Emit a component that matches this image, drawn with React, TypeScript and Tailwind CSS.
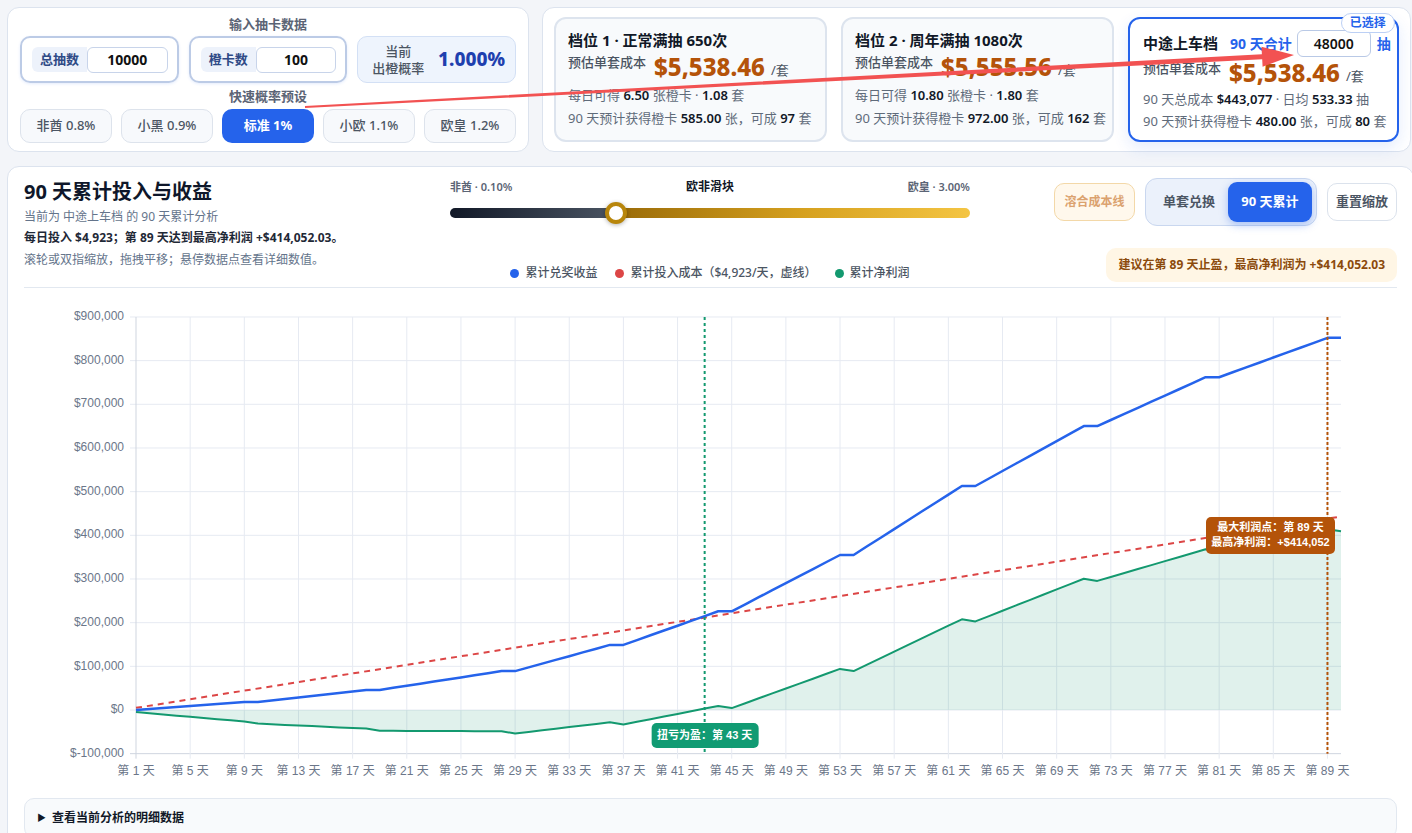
import React from 'react';

const TOTAL_COST = 443077;
const DAILY_COST = TOTAL_COST / 90;

// cumulative reward checkpoints (day, value); flat pairs = no exchange that day
const REWARD_KEYS: Array<[number, number]> = [
  [1, 0], [9, 18000], [10, 18000], [18, 46000], [19, 46000], [28, 89000], [29, 89000],
  [36, 149000], [37, 149000], [44, 226000], [45, 226000], [53, 355000], [54, 355000],
  [62, 513000], [63, 513000], [71, 650000], [72, 650000], [80, 762000], [81, 762000],
  [89, 852205], [90, 852205],
];

function rewardOn(day: number) {
  for (let i = 1; i < REWARD_KEYS.length; i++) {
    const [d1, v1] = REWARD_KEYS[i];
    if (day <= d1) {
      const [d0, v0] = REWARD_KEYS[i - 1];
      return v0 + ((v1 - v0) * (day - d0)) / (d1 - d0);
    }
  }
  return REWARD_KEYS[REWARD_KEYS.length - 1][1];
}

const PLOT_L = 112;
const PLOT_R = 1317;
const ZERO_Y = 414;
const PX_PER_100K = 43.67;
const PLOT_T = ZERO_Y - 9 * PX_PER_100K;
const PLOT_B = ZERO_Y + PX_PER_100K;

const xOf = (d: number) => PLOT_L + ((d - 1) / 89) * (PLOT_R - PLOT_L);
const yOf = (v: number) => ZERO_Y - (v / 100000) * PX_PER_100K;

const PRESETS = [
  { label: '非酋 0.8%' },
  { label: '小黑 0.9%' },
  { label: '标准 1%', active: true },
  { label: '小欧 1.1%' },
  { label: '欧皇 1.2%' },
];

function InputBox({ label, value }: { label: string; value: string }) {
  return (
    <div className="flex items-center rounded-[10px] border-2 border-[#bccbe6] pl-[10px] pr-[9px] shadow-[0_1px_3px_rgba(37,99,235,0.12)]">
      <span className="flex h-[25px] items-center rounded-l-[6px] bg-[#edf2fb] px-[8px] text-[13px] font-semibold text-[#2f4a86]">
        {label}
      </span>
      <div className="flex h-[26px] flex-1 items-center justify-center rounded-[6px] border border-[#c8d4ea] bg-white text-[14px] font-bold text-[#111111]">
        {value}
      </div>
    </div>
  );
}

function Num({ children }: { children: React.ReactNode }) {
  return <span className="font-semibold text-[#111827]">{children}</span>;
}

function PriceRow({ value }: { value: string }) {
  return (
    <div className="flex h-[32px] items-center whitespace-nowrap">
      <span className="-mt-[8px] text-[13px] font-medium text-[#4b5563]">预估单套成本</span>
      <span className="ml-[8px] text-[24px] font-extrabold leading-[32px] text-[#b45309]">{value}</span>
      <span className="ml-[6px] mt-[8px] text-[13px] text-[#4b5563]">/套</span>
    </div>
  );
}

function ProfitChart() {
  const days = Array.from({ length: 90 }, (_, i) => i + 1);
  const reward = days.map(rewardOn);
  const net = days.map((d, i) => reward[i] - DAILY_COST * d);
  const path = (vals: number[]) =>
    vals.map((v, i) => `${i ? 'L' : 'M'}${xOf(i + 1).toFixed(1)},${yOf(v).toFixed(1)}`).join(' ');
  const area = `${path(net)} L${xOf(90).toFixed(1)},${ZERO_Y} L${xOf(1).toFixed(1)},${ZERO_Y} Z`;
  const yTicks = [-100000, 0, 100000, 200000, 300000, 400000, 500000, 600000, 700000, 800000, 900000];
  const xTicks = Array.from({ length: 23 }, (_, i) => 1 + i * 4);
  const fmt = (v: number) => (v < 0 ? `$-${Math.abs(v).toLocaleString('en-US')}` : `$${v.toLocaleString('en-US')}`);
  const beX = xOf(43);
  const maxX = xOf(89);

  return (
    <svg
      width={1373}
      height={492}
      viewBox="0 0 1373 492"
      className="mt-[8px] block font-['Liberation_Sans','Noto_Sans_CJK_SC',sans-serif]"
    >
      {/* grid */}
      {yTicks.map((v) => (
        <g key={v}>
          <line x1={PLOT_L - 6} x2={PLOT_R} y1={yOf(v)} y2={yOf(v)} stroke={v === -100000 ? '#cfd5df' : '#e6eaf2'} strokeWidth={1} />
          <text x={PLOT_L - 12} y={yOf(v)} textAnchor="end" dominantBaseline="middle" fontSize={12} fill="#6b7689">
            {fmt(v)}
          </text>
        </g>
      ))}
      {xTicks.map((d) => (
        <g key={d}>
          <line x1={xOf(d)} x2={xOf(d)} y1={PLOT_T} y2={PLOT_B + 5} stroke={d === 1 ? '#cfd5df' : '#e6eaf2'} strokeWidth={1} />
          <text x={xOf(d)} y={476} textAnchor="middle" dominantBaseline="middle" fontSize={12} fill="#6b7689">
            第 {d} 天
          </text>
        </g>
      ))}

      {/* series */}
      <path d={area} fill="rgba(16,150,112,0.13)" />
      <line
        x1={xOf(1)}
        y1={yOf(DAILY_COST)}
        x2={xOf(90)}
        y2={yOf(TOTAL_COST)}
        stroke="#dc4646"
        strokeWidth={2}
        strokeDasharray="6 5"
      />
      <path d={path(net)} fill="none" stroke="#13996f" strokeWidth={2} strokeLinejoin="round" />
      <path d={path(reward)} fill="none" stroke="#2563eb" strokeWidth={2.5} strokeLinejoin="round" />

      {/* break-even */}
      <line x1={beX} x2={beX} y1={PLOT_T} y2={PLOT_B} stroke="#13996f" strokeWidth={2} strokeDasharray="3 3" />
      <rect x={beX - 53} y={427} width={107} height={25} rx={5} fill="#119b73" />
      <text x={beX} y={440} textAnchor="middle" dominantBaseline="middle" fontSize={11} fontWeight={700} fill="#ffffff">
        扭亏为盈：第 43 天
      </text>

      {/* max profit */}
      <line x1={maxX} x2={maxX} y1={PLOT_T} y2={PLOT_B} stroke="#b45309" strokeWidth={2} strokeDasharray="3 2" />
      <rect x={1182} y={221} width={129} height={37} rx={5} fill="#b45309" />
      <text x={1246.5} y={232.5} textAnchor="middle" dominantBaseline="middle" fontSize={11} fontWeight={700} fill="#ffffff">
        最大利润点：第 89 天
      </text>
      <text x={1246.5} y={247.5} textAnchor="middle" dominantBaseline="middle" fontSize={11} fontWeight={700} fill="#ffffff">
        最高净利润：+$414,052
      </text>
    </svg>
  );
}

export default function App() {
  return (
    <div className="relative h-[833px] w-[1412px] overflow-hidden bg-[#f3f5f9] p-[7px] font-['Noto_Sans','Noto_Sans_CJK_SC',sans-serif]">
      <div className="flex h-[145px] w-[1401px] gap-[13px]">
        {/* input panel */}
        <section className="w-[522px] shrink-0 rounded-[12px] border border-[#dce3ee] bg-white px-[12px] pb-[10px] pt-[6px]">
          <div className="h-[20px] text-center text-[13px] font-bold leading-[20px] text-[#5b6475]">输入抽卡数据</div>
          <div className="mt-[2px] grid h-[47px] grid-cols-3 gap-[10px]">
            <InputBox label="总抽数" value="10000" />
            <InputBox label="橙卡数" value="100" />
            <div className="flex items-center justify-between rounded-[10px] border border-[#d3e0f5] bg-[#eef4fd] pl-[14px] pr-[10px]">
              <div className="text-center text-[13px] font-medium leading-[17px] text-[#4b5563]">
                当前
                <br />
                出橙概率
              </div>
              <div className="text-[19px] font-extrabold text-[#1e40af]">1.000%</div>
            </div>
          </div>
          <div className="mt-[2px] h-[22px] text-center text-[13px] font-bold leading-[22px] text-[#5b6475]">快速概率预设</div>
          <div className="mt-[2px] grid h-[34px] grid-cols-5 gap-[9px]">
            {PRESETS.map((p) => (
              <button
                key={p.label}
                type="button"
                className={
                  p.active
                    ? 'rounded-[10px] bg-[#2563eb] text-[13px] font-bold text-white'
                    : 'rounded-[10px] border border-[#dde3ec] bg-[#f7f9fc] text-[13px] font-medium text-[#4b5563]'
                }
              >
                {p.label}
              </button>
            ))}
          </div>
        </section>

        {/* tier cards */}
        <section className="flex-1 rounded-[12px] border border-[#dce3ee] bg-white px-[11px] py-[9px]">
          <div className="grid h-[125px] grid-cols-[273px_273px_1fr] gap-[14px]">
            <div className="rounded-[12px] border-2 border-[#dde4ee] bg-[#f8fafc] px-[12px] pt-[10px]">
              <div className="text-[15px] font-bold leading-[22px] text-[#111827]">档位 1 · 正常满抽 650次</div>
              <PriceRow value="$5,538.46" />
              <div className="mt-[2px] text-[13px] leading-[20px] text-[#5f6b7a]">
                每日可得 <Num>6.50</Num> 张橙卡 · <Num>1.08</Num> 套
              </div>
              <div className="mt-[3px] whitespace-nowrap text-[13px] leading-[20px] text-[#5f6b7a]">
                90 天预计获得橙卡 <Num>585.00</Num> 张，可成 <Num>97</Num> 套
              </div>
            </div>
            <div className="rounded-[12px] border-2 border-[#dde4ee] bg-[#f8fafc] px-[12px] pt-[10px]">
              <div className="text-[15px] font-bold leading-[22px] text-[#111827]">档位 2 · 周年满抽 1080次</div>
              <PriceRow value="$5,555.56" />
              <div className="mt-[2px] text-[13px] leading-[20px] text-[#5f6b7a]">
                每日可得 <Num>10.80</Num> 张橙卡 · <Num>1.80</Num> 套
              </div>
              <div className="mt-[3px] whitespace-nowrap text-[13px] leading-[20px] text-[#5f6b7a]">
                90 天预计获得橙卡 <Num>972.00</Num> 张，可成 <Num>162</Num> 套
              </div>
            </div>
            <div className="relative rounded-[12px] border-2 border-[#2563eb] bg-white pl-[13px] pr-[6px] pt-[10px] shadow-[0_6px_16px_rgba(37,99,235,0.12)]">
              <span className="absolute -top-[6px] right-[2px] flex h-[20px] items-center rounded-full border border-[#bcd0f5] bg-white px-[8px] text-[12px] font-bold text-[#2563eb]">
                已选择
              </span>
              <div className="flex h-[28px] items-center whitespace-nowrap">
                <span className="text-[15px] font-bold text-[#111827]">中途上车档</span>
                <span className="ml-[12px] text-[14px] font-bold text-[#2563eb]">90 天合计</span>
                <div className="ml-[5px] flex h-[27px] w-[74px] items-center justify-center rounded-[6px] border border-[#b9c9e6] bg-white text-[14px] font-semibold text-[#111111]">
                  48000
                </div>
                <span className="ml-[6px] text-[14px] font-bold text-[#2563eb]">抽</span>
              </div>
              <PriceRow value="$5,538.46" />
              <div className="text-[13px] leading-[20px] text-[#5f6b7a]">
                90 天总成本 <Num>$443,077</Num> · 日均 <Num>533.33</Num> 抽
              </div>
              <div className="mt-[2px] whitespace-nowrap text-[13px] leading-[20px] text-[#5f6b7a]">
                90 天预计获得橙卡 <Num>480.00</Num> 张，可成 <Num>80</Num> 套
              </div>
            </div>
          </div>
        </section>
      </div>

      {/* chart panel */}
      <section className="mt-[14px] w-[1407px] rounded-t-[12px] border border-[#dce3ee] bg-white px-[16px] pt-[11px]">
        <div className="flex h-[110px] border-b border-[#e2e8f0]">
          <div className="w-[426px] shrink-0">
            <h2 className="text-[20px] font-bold leading-[28px] text-[#0f172a]">90 天累计投入与收益</h2>
            <p className="mt-[2px] text-[12px] leading-[18px] text-[#64748b]">当前为 中途上车档 的 90 天累计分析</p>
            <p className="mt-[3px] text-[12px] font-bold leading-[18px] text-[#1f2937]">
              每日投入 $4,923；第 89 天达到最高净利润 +$414,052.03。
            </p>
            <p className="mt-[4px] text-[12px] leading-[18px] text-[#64748b]">滚轮或双指缩放，拖拽平移；悬停数据点查看详细数值。</p>
          </div>

          <div className="flex w-[520px] shrink-0 flex-col pb-[5px]">
            <div className="flex h-[18px] items-center justify-between">
              <span className="text-[11px] font-semibold text-[#5b6475]">非酋 · 0.10%</span>
              <span className="text-[12px] font-bold text-[#111827]">欧非滑块</span>
              <span className="text-[11px] font-semibold text-[#5b6475]">欧皇 · 3.00%</span>
            </div>
            <div className="relative mt-[12px] h-[10px] rounded-full bg-[linear-gradient(90deg,#111827_0%,#4b5563_32%,#9a6b08_32%,#d6a11f_68%,#f4c543_100%)]">
              <span className="absolute -top-[6px] left-[155px] h-[22px] w-[22px] rounded-full border-[4px] border-[#b8860b] bg-white shadow-[0_1px_4px_rgba(0,0,0,0.3)]" />
            </div>
            <div className="mt-auto flex h-[18px] items-center justify-center gap-[18px] text-[12px] font-medium text-[#4b5563]">
              <span className="flex items-center gap-[6px]">
                <span className="h-[9px] w-[9px] rounded-full bg-[#2563eb]" />
                累计兑奖收益
              </span>
              <span className="flex items-center gap-[6px]">
                <span className="h-[9px] w-[9px] rounded-full bg-[#dc4646]" />
                累计投入成本（$4,923/天，虚线）
              </span>
              <span className="flex items-center gap-[6px]">
                <span className="h-[9px] w-[9px] rounded-full bg-[#13996f]" />
                累计净利润
              </span>
            </div>
          </div>

          <div className="flex flex-1 flex-col items-end pb-[5px]">
            <div className="flex h-[48px] items-center gap-[10px]">
              <button type="button" className="h-[38px] w-[81px] rounded-[10px] border border-[#f3d8a8] bg-[#fff8ec] text-[12px] font-bold text-[#dba26f]">
                溶合成本线
              </button>
              <div className="flex h-[48px] items-center rounded-[12px] border border-[#c9d7ef] bg-[#ebf1fb] p-[4px]">
                <button type="button" className="h-[38px] w-[78px] text-[13px] font-bold text-[#4b5563]">
                  单套兑换
                </button>
                <button
                  type="button"
                  className="h-[40px] w-[84px] rounded-[9px] bg-[#2563eb] text-[13px] font-bold text-white shadow-[0_3px_8px_rgba(37,99,235,0.35)]"
                >
                  90 天累计
                </button>
              </div>
              <button type="button" className="h-[38px] w-[70px] rounded-[10px] border border-[#dbe2ec] bg-white text-[13px] font-bold text-[#4b5563]">
                重置缩放
              </button>
            </div>
            <div className="mt-auto flex h-[34px] items-center rounded-[10px] bg-[#fff6e5] px-[12px] text-[12px] font-bold text-[#8b4a0c]">
              建议在第 89 天止盈，最高净利润为 +$414,052.03
            </div>
          </div>
        </div>

        <ProfitChart />

        <div className="mt-[10px] flex h-[40px] items-center gap-[6px] rounded-[10px] border border-[#e2e8f0] bg-[#f8fafc] px-[12px] text-[12px] font-bold text-[#111827]">
          <span className="text-[9px]">▶</span>
          查看当前分析的明细数据
        </div>
      </section>

      {/* annotation arrow */}
      <svg className="pointer-events-none absolute left-0 top-0" width={1412} height={833}>
        <polygon
          points="304.95,106 1261.9,54.2 1261.5,46.7 1294,55 1262.6,66.7 1262.2,59.2 305.05,108"
          fill="#f25252"
        />
      </svg>
    </div>
  );
}
